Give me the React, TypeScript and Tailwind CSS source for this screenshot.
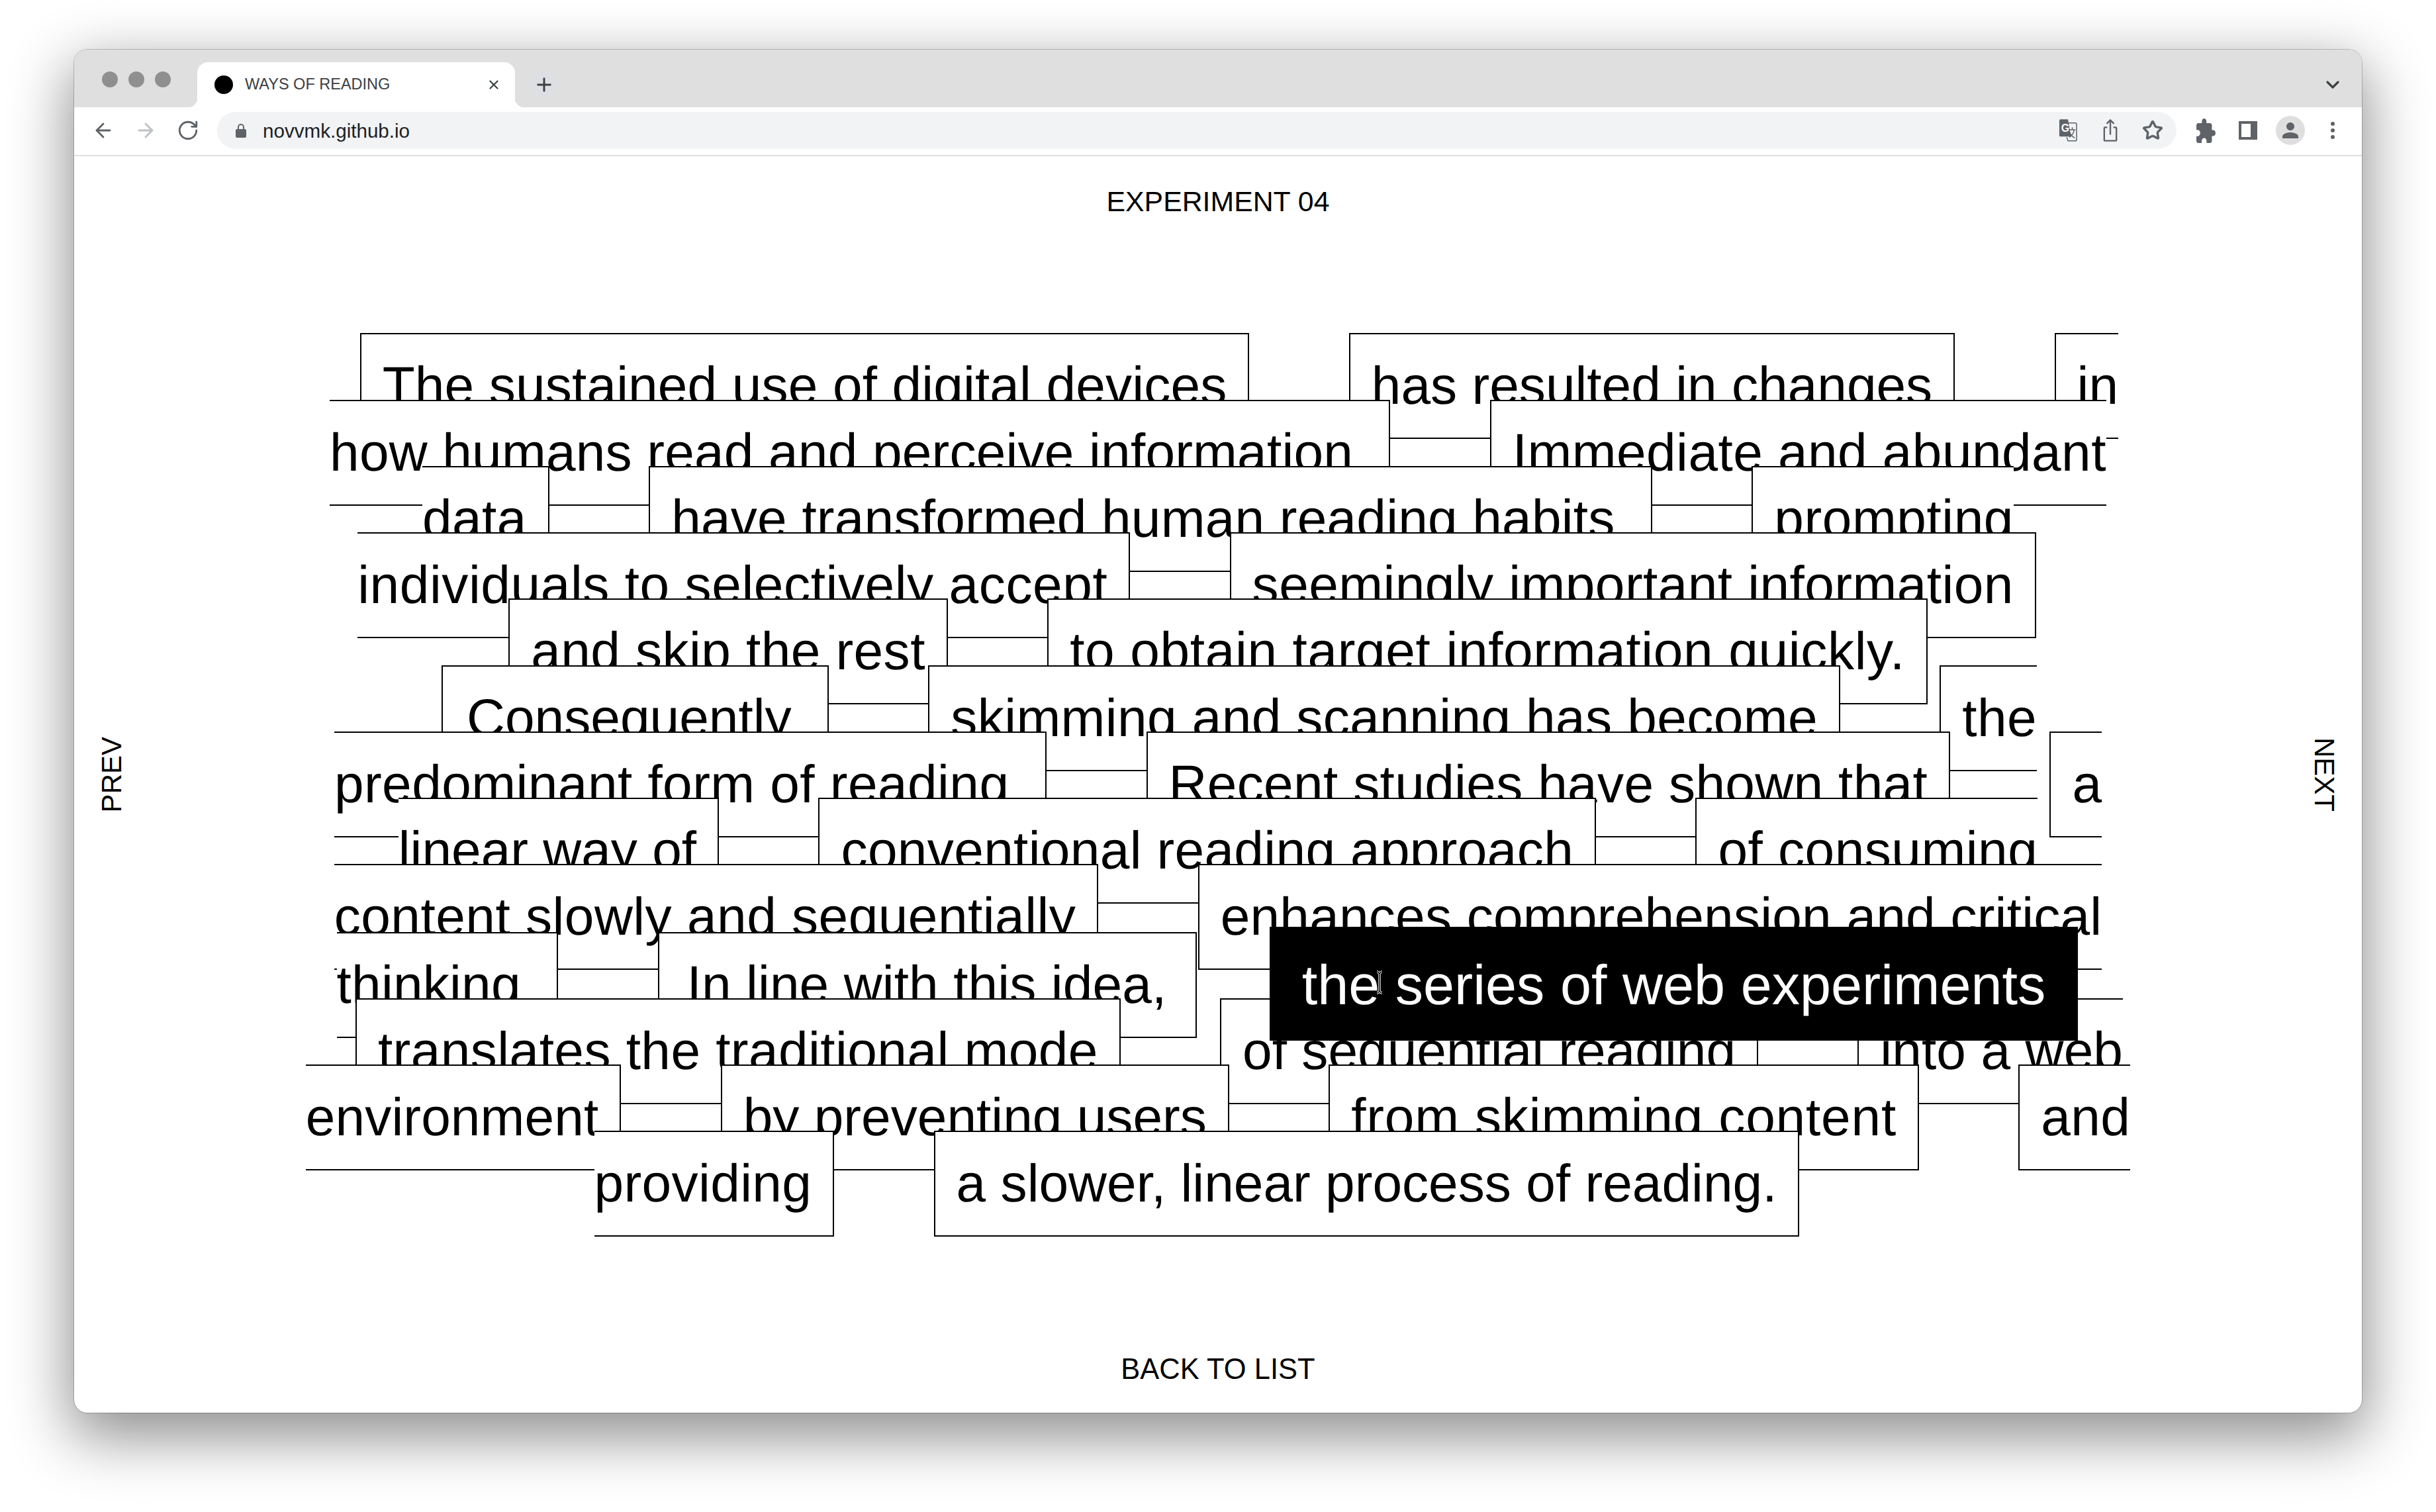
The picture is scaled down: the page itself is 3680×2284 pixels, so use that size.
import { Fragment } from 'react';
import { ArrowLeft, ArrowRight, RotateCw, ChevronDown, Plus, X, Star } from 'lucide-react';

// '\n' marks where a line wraps, BR ends a line after a closed box.
// the second value nudges spacing where Helvetica runs wider than Liberation
const BR = 'BR';
const phrases: [string, string?][] = [
  ['The sustained use of digital devices', 'tracking-[0.13px]'],
  ['has resulted in changes'],
  ['in\nhow humans read and perceive information\u00a0', 'tracking-[0.18px]'],
  ['Immediate and abundant\ndata', 'tracking-[0.43px]'],
  ['have transformed human reading habits\u00a0', 'tracking-[0.19px]'],
  ['prompting\nindividuals to selectively accept', 'tracking-[0.55px]'],
  ['seemingly important information', 'tracking-[0.42px]'],
  [BR],
  ['and skip the rest', 'tracking-[0.41px]'],
  ['to obtain target information quickly.', 'tracking-[0.63px]'],
  [BR],
  ['Consequently\u00a0', 'pl-[36px]'],
  ['skimming and scanning has become', 'tracking-[0.37px]'],
  ['the\npredominant form of reading\u00a0', 'tracking-[0.43px]'],
  ['Recent studies have shown that', 'tracking-[0.31px]'],
  ['a\nlinear way of'],
  ['conventional reading approach', 'tracking-[0.32px]'],
  ['of consuming\ncontent slowly and sequentially', 'tracking-[0.47px]'],
  ['enhances comprehension and critical\nthinking\u00a0', 'tracking-[0.2px]'],
  ['In line with this idea,', 'pl-[42px] pr-[44px] tracking-[0.1px]'],
  ['the series of web experiments'],
  [BR],
  ['translates the traditional mode', 'tracking-[0.42px]'],
  ['of sequential reading'],
  ['into a web\nenvironment', 'tracking-[0.1px]'],
  ['by preventing users'],
  ['from skimming content', 'tracking-[0.8px]'],
  ['and\nproviding', 'tracking-[0.35px]'],
  ['a slower, linear process of reading.'],
];

const hovered = 'the series of web experiments';

function TranslateIcon() {
  return (
    <svg viewBox="0 0 30 38" className="w-[28px] h-[36px]">
      <path d="M14 7h13a2 2 0 0 1 2 2v25a2 2 0 0 1-2 2H15l-2-6" fill="none" stroke="#5f6368" strokeWidth="1.6" />
      <path d="M3 1h12l5 28H3a2 2 0 0 1-2-2V3a2 2 0 0 1 2-2z" fill="#5f6368" />
      <text x="4" y="21" fontSize="17" fontWeight="700" fill="#fff" fontFamily="Liberation Sans">G</text>
      <path d="M17 18h10M22 14v4M25 18c-1 6-4 10-8 12M18 22c1 4 5 8 8 9" fill="none" stroke="#5f6368" strokeWidth="1.6" />
    </svg>
  );
}

function ShareIcon() {
  return (
    <svg viewBox="0 0 24 38" className="w-[22px] h-[36px]" fill="none" stroke="#5f6368" strokeWidth="2.6">
      <path d="M7 14H3a1 1 0 0 0-1 1v20a1 1 0 0 0 1 1h18a1 1 0 0 0 1-1V15a1 1 0 0 0-1-1h-4" strokeLinejoin="round" />
      <path d="M12 26V2M6 8l6-6 6 6" />
    </svg>
  );
}

function PuzzleIcon() {
  return (
    <svg viewBox="2 1 21 21" className="w-[29px] h-[37px]" preserveAspectRatio="none" fill="#5f6368">
      <path d="M20.5 11H19V7c0-1.1-.9-2-2-2h-4V3.5C13 2.12 11.88 1 10.5 1S8 2.12 8 3.5V5H4c-1.1 0-1.99.9-1.99 2v3.8H3.5c1.49 0 2.7 1.21 2.7 2.7s-1.21 2.7-2.7 2.7H2V20c0 1.1.9 2 2 2h3.8v-1.5c0-1.49 1.21-2.7 2.7-2.7 1.49 0 2.7 1.21 2.7 2.7V22H17c1.1 0 2-.9 2-2v-4h1.5c1.38 0 2.5-1.12 2.5-2.5S21.88 11 20.5 11z" />
    </svg>
  );
}

function Cursor() {
  return (
    <svg viewBox="0 0 12 36" className="absolute left-[160px] top-[66px] w-[12px] h-[36px]">
      <path d="M2 2c2 0 3 1 4 3 1-2 2-3 4-3M6 5v26M2 34c2 0 3-1 4-3 1 2 2 3 4 3" fill="none" stroke="#fff" strokeWidth="3.4" />
      <path d="M2 2c2 0 3 1 4 3 1-2 2-3 4-3M6 5v26M2 34c2 0 3-1 4-3 1 2 2 3 4 3" fill="none" stroke="#000" strokeWidth="1.4" />
    </svg>
  );
}

function BrowserBar() {
  return (
    <div className="shrink-0">
      <div className="h-[87px] bg-[#dfdfdf] flex items-end pl-[42px] pr-[28px]">
        <div className="self-start mt-[33px] flex gap-[16px] mr-[40px]">
          <span className="w-[24px] h-[24px] rounded-full bg-[#8f8f8f]" />
          <span className="w-[24px] h-[24px] rounded-full bg-[#8f8f8f]" />
          <span className="w-[24px] h-[24px] rounded-full bg-[#8f8f8f]" />
        </div>
        <div className="relative w-[480px] h-[68px] bg-white rounded-t-[16px] flex items-center pl-[26px] pr-[21px] text-[#3c4043]">
          <span className="absolute -left-[14px] bottom-0 w-[14px] h-[14px] bg-[radial-gradient(circle_at_0_0,transparent_14px,white_14.5px)]" />
          <span className="absolute -right-[14px] bottom-0 w-[14px] h-[14px] bg-[radial-gradient(circle_at_100%_0,transparent_14px,white_14.5px)]" />
          <span className="w-[28px] h-[28px] rounded-full bg-black mr-[18px]" />
          <span className="flex-1 text-[23.5px]">WAYS OF READING</span>
          <X className="w-[22px] h-[22px]" strokeWidth={2.4} />
        </div>
        <div className="ml-[22px] self-start mt-[31px] w-[44px] h-[44px] rounded-full bg-[#dedfe3] flex items-center justify-center text-[#3c4043]">
          <Plus className="w-[32px] h-[32px]" strokeWidth={2.2} />
        </div>
        <div className="ml-auto self-start mt-[37px] text-[#3c4043]">
          <ChevronDown className="w-[32px] h-[32px]" strokeWidth={2.4} />
        </div>
      </div>
      <div className="h-[74px] bg-white border-b-2 border-[#dfdfdf] flex items-center px-[12px] pb-[2px]">
        <div className="flex items-center mr-[12px] text-[#5f6368]">
          <span className="w-[64px] flex justify-center"><ArrowLeft className="w-[34px] h-[34px]" strokeWidth={2} /></span>
          <span className="w-[64px] flex justify-center"><ArrowRight className="w-[34px] h-[34px] text-[#bdc1c6]" strokeWidth={2} /></span>
          <span className="w-[64px] flex justify-center"><RotateCw className="w-[34px] h-[34px]" strokeWidth={2} /></span>
        </div>
        <div className="flex-1 h-[56px] bg-[#f1f3f4] rounded-full flex items-center pl-[28px] pr-[4px]">
          <svg viewBox="0 0 16 22" className="w-[16px] h-[22px] mr-[25px]">
            <path d="M4 10V6a4 4 0 0 1 8 0v4" fill="none" stroke="#5f6368" strokeWidth="2" />
            <rect x="0" y="9" width="16" height="13" rx="2" fill="#5f6368" />
          </svg>
          <span className="text-[29.6px] text-[#202124] mt-[2px]">novvmk.github.io</span>
          <div className="ml-auto flex items-center text-[#5f6368]">
            <span className="w-[64px] flex justify-center"><TranslateIcon /></span>
            <span className="w-[64px] flex justify-center"><ShareIcon /></span>
            <span className="w-[64px] flex justify-center"><Star className="w-[32px] h-[32px]" strokeWidth={2.6} /></span>
          </div>
        </div>
        <div className="flex items-center ml-[12px]">
          <span className="w-[64px] flex justify-center"><PuzzleIcon /></span>
          <span className="w-[64px] flex justify-center">
            <span className="w-[28px] h-[28px] bg-[#5f6368] flex items-center justify-start pl-[4px]">
              <span className="w-[14px] h-[20px] bg-white" />
            </span>
          </span>
          <span className="w-[64px] flex justify-center">
            <span className="w-[44px] h-[44px] rounded-full bg-[#dfdfdf] flex items-center justify-center">
              <svg viewBox="0 0 24 24" className="w-[36px] h-[36px]" fill="#5f6368">
                <path d="M12 12c2.21 0 4-1.79 4-4s-1.79-4-4-4-4 1.79-4 4 1.79 4 4 4zm0 2c-2.67 0-8 1.34-8 4v2h16v-2c0-2.66-5.33-4-8-4z" />
              </svg>
            </span>
          </span>
          <span className="w-[64px] flex flex-col gap-[4px] items-center">
            <span className="w-[6px] h-[6px] rounded-full bg-[#5f6368]" />
            <span className="w-[6px] h-[6px] rounded-full bg-[#5f6368]" />
            <span className="w-[6px] h-[6px] rounded-full bg-[#5f6368]" />
          </span>
        </div>
      </div>
    </div>
  );
}

function Phrase({ text, extra }: { text: string; extra?: string }) {
  const parts = text.split('\n');
  return (
    <span className={`mx-[64px] px-[32px] py-[33px] border-2 border-black bg-white ${extra ?? ''}`}>
      {parts[0]}
      {parts[1] && <br />}
      {parts[1]}
    </span>
  );
}

export default function App() {
  return (
    <div className="w-[3680px] h-[2284px] bg-white pt-[75px] pl-[112px] font-['Liberation_Sans',Arial,sans-serif] text-black overflow-hidden">
      <div className="w-[3456px] h-[2059px] bg-white rounded-[20px] overflow-hidden flex flex-col shadow-[0_0_0_1px_rgba(0,0,0,0.2),0_30px_90px_6px_rgba(0,0,0,0.45)]">
        <BrowserBar />
        <div className="flex-1 flex flex-col items-center min-h-0">
          <div className="mt-[43px] text-[42.8px] leading-[50px]">EXPERIMENT 04</div>
          <div className="w-full flex-1 flex items-center min-h-0">
            <div className="w-[308px] pl-[32px] mb-[32px]">
              <span className="block rotate-180 [writing-mode:vertical-rl] text-[42px] leading-[50px]">PREV</span>
            </div>
            <div className="w-[2840px] whitespace-nowrap text-center text-[80.24px] leading-[100.25px] [text-rendering:geometricPrecision]">
              {phrases.map(([p, extra], i) => {
                if (p === BR) return <br key={i} />;
                if (p === hovered) {
                  return (
                    <Fragment key={i}>
                      <span className="relative z-10 top-[2px] inline-block ml-[23px] mr-[32px] -mt-[38px] -mb-[34px] pt-[38px] pb-[34px] px-[49px] bg-black text-white text-[84.6px] leading-[100px]">
                        {p}
                        <Cursor />
                      </span>{' '}
                    </Fragment>
                  );
                }
                return (
                  <Fragment key={i}>
                    <Phrase text={p} extra={extra} />{' '}
                  </Fragment>
                );
              })}
            </div>
            <div className="flex-1 flex justify-end pr-[32px] mb-[32px]">
              <span className="block [writing-mode:vertical-rl] text-[42px] leading-[50px]">NEXT</span>
            </div>
          </div>
          <div className="mb-[41px] text-[43.5px] leading-[50px]">BACK TO LIST</div>
        </div>
      </div>
    </div>
  );
}
